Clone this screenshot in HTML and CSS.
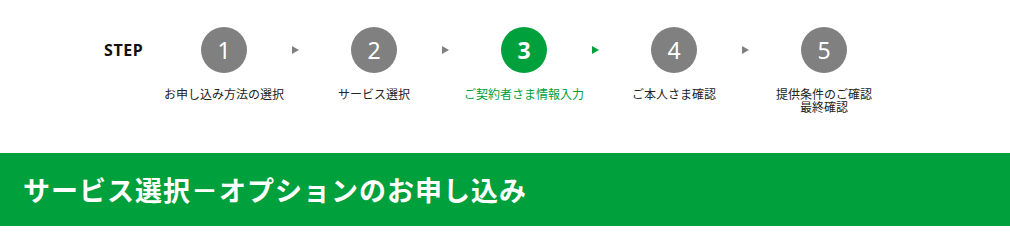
FILE: index.html
```html
<!DOCTYPE html>
<html lang="ja">
<head>
<meta charset="utf-8">
<title>サービス選択－オプションのお申し込み</title>
<link rel="stylesheet" href="styles.css">
</head>
<body>
<div class="steps">
  <div class="step-title">STEP</div>
  <div class="step">
    <div class="circle">1</div>
    <div class="label">お申し込み方法の選択</div>
  </div>
  <div class="step">
    <div class="circle">2</div>
    <div class="label">サービス選択</div>
  </div>
  <div class="step active">
    <div class="circle">3</div>
    <div class="label">ご契約者さま情報入力</div>
  </div>
  <div class="step">
    <div class="circle">4</div>
    <div class="label">ご本人さま確認</div>
  </div>
  <div class="step last">
    <div class="circle">5</div>
    <div class="label">提供条件のご確認<br>最終確認</div>
  </div>
</div>
<div class="page-title">
  <h1>サービス選択－オプションのお申し込み</h1>
</div>
</body>
</html>
```

FILE: styles.css
```css
* { box-sizing: border-box; }
html, body {
  margin: 0;
  padding: 0;
  background: #fff;
}
body {
  font-family: "Noto Sans CJK JP", "Noto Sans", sans-serif;
  color: #222;
}
.steps {
  display: flex;
  padding: 27px 0 0 0;
  height: 153px;
}
.step-title {
  width: 149px;
  padding-left: 104px;
  height: 46px;
  display: flex;
  align-items: center;
  font-family: "Noto Sans", "Noto Sans CJK JP", sans-serif;
  font-weight: 700;
  font-size: 16px;
  letter-spacing: 0.6px;
  color: #111;
}
.step {
  width: 150px;
  display: flex;
  flex-direction: column;
  align-items: center;
  position: relative;
}
.step::after {
  content: "";
  position: absolute;
  left: 143px;
  top: 19px;
  width: 0;
  height: 0;
  border-top: 4px solid transparent;
  border-bottom: 4px solid transparent;
  border-left: 7px solid #808080;
}
.step.last::after { display: none; }
.step.active::after { border-left-color: #00a03c; }
.circle {
  width: 46px;
  height: 46px;
  border-radius: 50%;
  background: #808080;
  color: #fff;
  display: flex;
  align-items: center;
  justify-content: center;
  font-family: "Noto Sans", sans-serif;
  font-size: 23px;
  line-height: 1;
}
.step.active .circle {
  background: #00a03c;
  font-weight: 700;
}
.label {
  margin-top: 14px;
  font-size: 12px;
  line-height: 13px;
  text-align: center;
  color: #222;
  white-space: nowrap;
}
.step.active .label { color: #00a03c; }
.page-title {
  background: #00a03c;
  height: 73px;
  display: flex;
  align-items: center;
  padding-left: 23px;
}
.page-title h1 {
  margin: 0;
  color: #fff;
  font-size: 27px;
  font-weight: 700;
  line-height: 1;
  letter-spacing: 1px;
}
```
